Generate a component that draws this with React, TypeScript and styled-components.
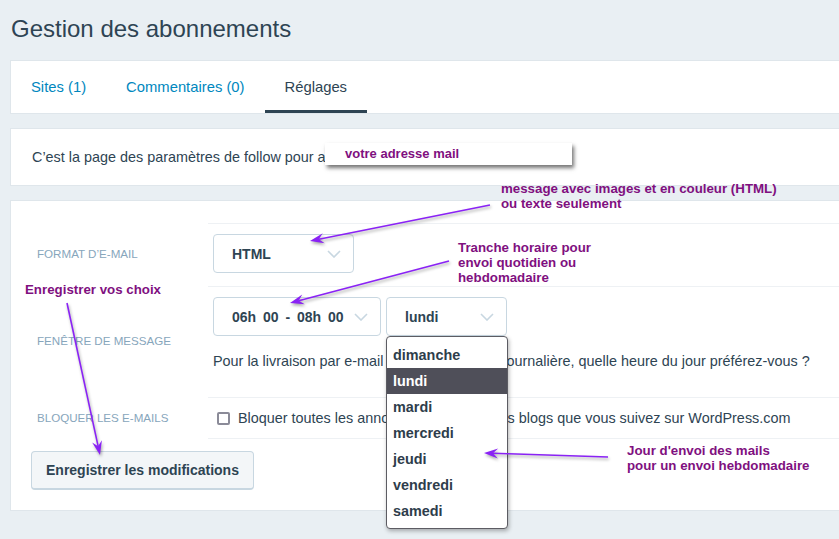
import React from "react";
import styled, { createGlobalStyle } from "styled-components";

const GlobalStyle = createGlobalStyle`
  html, body { margin: 0; padding: 0; background: #e9eff3; }
  body { font-family: "Liberation Sans", Arial, sans-serif; color: #2e4453; }
  * { box-sizing: border-box; }
`;

const Page = styled.div`
  position: relative;
  width: 839px;
  height: 539px;
  overflow: hidden;
  padding-left: 10px;
`;

const Title = styled.h1`
  margin: 0 0 19px 1px;
  padding-top: 17px;
  font-size: 24px;
  line-height: 24px;
  font-weight: normal;
  color: #2e4453;
`;

const Card = styled.section`
  background: #fff;
  border: 1px solid #dfe6eb;
  margin-right: -4px;
`;

const TabBar = styled(Card)`
  display: flex;
  height: 54px;
`;

const Tab = styled.a<{ $active?: boolean }>`
  display: flex;
  align-items: center;
  padding: 0 20px;
  font-size: 14.8px;
  text-decoration: none;
  color: ${(p) => (p.$active ? "#2e4453" : "#0087be")};
  box-shadow: ${(p) => (p.$active ? "inset 0 -3px 0 #2e4453" : "none")};
`;

const Notice = styled(Card)`
  margin-top: 14px;
  height: 58px;
  display: flex;
  align-items: center;
  padding: 0 21px;
  font-size: 14.4px;
  white-space: nowrap;
`;

const FormCard = styled(Card)`
  margin-top: 14px;
  padding: 22px 0 20px;
`;

const Grid = styled.div`
  display: grid;
  grid-template-columns: 197px 1fr;
`;

const Label = styled.div`
  display: flex;
  align-items: center;
  padding: 0 0 2px 26px;
  font-size: 11.6px;
  text-transform: uppercase;
  color: #87a6bc;
`;

const Field = styled.div<{ $variant?: "select" | "stack" | "check" }>`
  border-top: 1px solid #eef1f4;
  padding: ${(p) =>
    p.$variant === "stack" ? "10px 0 0 5px" : p.$variant === "check" ? "8px 0 8px 5px" : "10px 0 13px 5px"};
  ${(p) => (p.$variant === "check" ? "border-bottom: 1px solid #eef1f4;" : "")}
`;

const SelectRow = styled.div`
  display: flex;
  gap: 5px;
`;

const SelectBox = styled.div<{ $w: number }>`
  position: relative;
  width: ${(p) => p.$w}px;
  height: 39px;
  border: 1px solid #c8d7e1;
  border-radius: 4px;
  background: #fff;
  display: flex;
  align-items: center;
  justify-content: space-between;
  padding: 0 12px 0 18px;
  font-size: 14px;
  font-weight: bold;
  word-spacing: 3px;
  color: #2e4453;
  white-space: pre;
`;

const Menu = styled.ul`
  position: absolute;
  top: 38px;
  left: -1px;
  width: 122px;
  margin: 0;
  padding: 5px 0 4px;
  list-style: none;
  background: #fff;
  border: 1px solid #5c5c63;
  border-radius: 4px;
  box-shadow: 1px 2px 4px rgba(0, 0, 0, 0.3);
  word-spacing: normal;
  z-index: 5;
`;

const MenuItem = styled.li<{ $selected?: boolean }>`
  height: 26px;
  line-height: 26px;
  padding-left: 6px;
  font-size: 14.4px;
  font-weight: bold;
  color: ${(p) => (p.$selected ? "#fff" : "#2e3d4b")};
  background: ${(p) => (p.$selected ? "#4f4f59" : "transparent")};
`;

const Description = styled.p`
  margin: 13px 0 24px;
  font-size: 14.4px;
  line-height: 24px;
  white-space: nowrap;
`;

const CheckRow = styled.label`
  display: flex;
  align-items: center;
  gap: 8px;
  padding-left: 4px;
  font-size: 14.4px;
  line-height: 24px;
  white-space: nowrap;
`;

const CheckBox = styled.span`
  width: 13px;
  height: 13px;
  border: 2px solid #8b8b98;
  border-radius: 2px;
  flex: none;
`;

const SaveButton = styled.button`
  display: block;
  margin: 12px 0 0 20px;
  height: 39px;
  padding: 0 14px;
  border: 1px solid #c8d7e1;
  border-bottom-width: 2px;
  border-radius: 4px;
  background: #f3f6f8;
  font: bold 14px "Liberation Sans", Arial, sans-serif;
  color: #2e4453;
`;

const EmailTag = styled.div`
  position: absolute;
  left: 325px;
  top: 143px;
  width: 247px;
  height: 22px;
  padding-left: 20px;
  background: #fff;
  box-shadow: 2px 3px 4px rgba(0, 0, 0, 0.55);
  font-size: 13px;
  font-weight: bold;
  line-height: 22px;
  color: #80107f;
  z-index: 6;
`;

const Note = styled.div<{ $left: number; $top: number }>`
  position: absolute;
  left: ${(p) => p.$left}px;
  top: ${(p) => p.$top}px;
  font-size: 13.3px;
  font-weight: bold;
  line-height: 15px;
  color: #80107f;
  white-space: nowrap;
  z-index: 7;
`;

const ArrowLayer = styled.svg`
  position: absolute;
  left: 0;
  top: 0;
  pointer-events: none;
  z-index: 8;
  filter: drop-shadow(1px 2px 1.5px rgba(0, 0, 0, 0.35));
`;

const Chevron = () => (
  <svg width="14" height="8" viewBox="0 0 14 8">
    <path d="M1 1 L7 7 L13 1" stroke="#c8d7e1" strokeWidth="1.6" fill="none" />
  </svg>
);

type Arrow = { x1: number; y1: number; x2: number; y2: number };

const arrows: Arrow[] = [
  { x1: 490, y1: 205, x2: 310, y2: 241 },
  { x1: 449, y1: 261, x2: 290, y2: 303 },
  { x1: 67, y1: 303, x2: 100, y2: 455 },
  { x1: 608, y1: 457, x2: 484, y2: 453 },
];

function arrowGeometry(a: Arrow) {
  const dx = a.x2 - a.x1;
  const dy = a.y2 - a.y1;
  const len = Math.hypot(dx, dy);
  const ux = dx / len;
  const uy = dy / len;
  const nx = -uy;
  const ny = ux;
  const L = 14;
  const W = 5;
  const N = 9;
  const bx = a.x2 - ux * L;
  const by = a.y2 - uy * L;
  const notchX = a.x2 - ux * N;
  const notchY = a.y2 - uy * N;
  return {
    head: `${a.x2},${a.y2} ${bx + nx * W},${by + ny * W} ${notchX},${notchY} ${bx - nx * W},${by - ny * W}`,
    line: { x1: a.x1, y1: a.y1, x2: notchX, y2: notchY },
  };
}

const days = ["dimanche", "lundi", "mardi", "mercredi", "jeudi", "vendredi", "samedi"];

export default function App() {
  return (
    <>
      <GlobalStyle />
      <Page>
        <Title>Gestion des abonnements</Title>
        <TabBar>
          <Tab>Sites (1)</Tab>
          <Tab>Commentaires (0)</Tab>
          <Tab $active>Réglages</Tab>
        </TabBar>
        <Notice>C’est la page des paramètres de follow pour adresse@exemple.com</Notice>
        <FormCard>
          <Grid>
            <Label>Format d’e-mail</Label>
            <Field $variant="select">
              <SelectBox $w={141}>
                HTML
                <Chevron />
              </SelectBox>
            </Field>
            <Label>Fenêtre de message</Label>
            <Field $variant="stack">
              <SelectRow>
                <SelectBox $w={168}>
                  06h 00 - 08h 00
                  <Chevron />
                </SelectBox>
                <SelectBox $w={121}>
                  lundi
                  <Chevron />
                  <Menu>
                    {days.map((d) => (
                      <MenuItem key={d} $selected={d === "lundi"}>
                        {d}
                      </MenuItem>
                    ))}
                  </Menu>
                </SelectBox>
              </SelectRow>
              <Description>
                Pour la livraison par e-mail hebdomadaire ou journalière, quelle heure du jour préférez-vous ?
              </Description>
            </Field>
            <Label>Bloquer les e-mails</Label>
            <Field $variant="check">
              <CheckRow>
                <CheckBox />
                Bloquer toutes les annonces par e-mail des blogs que vous suivez sur WordPress.com
              </CheckRow>
            </Field>
          </Grid>
          <SaveButton>Enregistrer les modifications</SaveButton>
        </FormCard>

        <EmailTag>votre adresse mail</EmailTag>
        <Note $left={501} $top={181}>
          message avec images et en couleur (HTML)
          <br />
          ou texte seulement
        </Note>
        <Note $left={458} $top={240}>
          Tranche horaire pour
          <br />
          envoi quotidien ou
          <br />
          hebdomadaire
        </Note>
        <Note $left={25} $top={282}>
          Enregistrer vos choix
        </Note>
        <Note $left={627} $top={443}>
          Jour d'envoi des mails
          <br />
          pour un envoi hebdomadaire
        </Note>
        <ArrowLayer width="839" height="539" viewBox="0 0 839 539">
          {arrows.map((a, i) => {
            const g = arrowGeometry(a);
            return (
              <g key={i}>
                <line {...g.line} stroke="#8a22f5" strokeWidth="1.6" />
                <polygon points={g.head} fill="#8a22f5" />
              </g>
            );
          })}
        </ArrowLayer>
      </Page>
    </>
  );
}
